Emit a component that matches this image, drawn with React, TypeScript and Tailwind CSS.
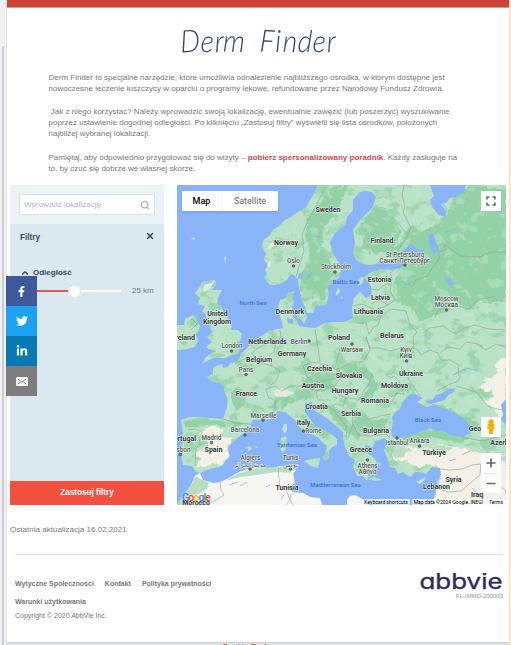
import React from "react";
import { FaFacebookF, FaTwitter, FaLinkedinIn } from "react-icons/fa";
import { ChevronUp, Search, X } from "lucide-react";

const mainland =
  "M318 185L315 192L310 200L306 207L298 212L291 217L285 220L279 226L273 230L269 236L263 240L262 248L266 254L264 260L268 265L265 270L267 274L264 278L270 285L278 285L287 280L291 274L294 275L298 280L300 292L303 303L305 307L307 313L313 313L315 306L326 305L329 294L327 286L333 283L339 277L342 268L337 260L332 252L330 242L335 233L345 225L347 217L353 210L353 200L360 192L365 191L372 192L376 197L373 207L366 214L360 220L353 230L355 243L353 253L356 260L363 264L370 265L383 263L397 261L406 263L403 267L392 270L380 269L370 273L364 277L368 282L371 286L372 295L366 298L360 292L354 298L352 308L353 318L345 322L335 322L325 323L315 328L305 327L299 326L297 321L293 317L292 307L294 302L292 299L294 291L288 293L286 298L280 300L278 308L279 313L282 323L283 328L273 330L268 331L263 335L259 337L255 343L250 345L242 353L237 362L230 363L228 367L223 368L222 364L216 366L213 368L213 374L207 377L211 381L220 383L224 387L225 393L228 399L227 407L223 419L210 418L198 417L190 417L181 420L183 433L181 453L183 465L192 466L196 472L200 473L210 469L222 466L226 460L230 457L228 448L235 440L241 435L248 430L251 426L252 420L263 420L270 419L273 416L278 411L285 412L291 417L295 420L299 426L302 430L313 435L319 438L322 442L327 446L326 451L323 458L325 461L329 457L329 451L332 447L337 445L337 439L330 433L320 428L315 426L312 422L308 416L305 412L305 403L312 402L313 407L317 412L327 418L337 427L343 432L343 437L345 447L350 457L355 460L353 467L357 476L363 476L367 481L369 474L376 476L371 468L380 466L374 458L367 453L365 445L373 447L375 441L385 438L388 441L384 450L388 460L390 467L395 468L398 474L403 472L410 477L415 472L420 472L426 474L432 467L440 468L441 475L438 480L435 495L432 505H506V185Z";
const africa =
  "M177 505L184 494L190 487L195 476L200 473L203 480L214 483L220 482L229 478L237 473L247 469L257 467L269 469L280 466L292 467L296 470L293 474L295 483L290 487L292 492L303 493L310 497L320 498L322 505Z M347 505V500L350 496L355 495L362 499L365 505Z";
const britain =
  "M203 282L209 281L215 280L216 284L212 290L222 290L218 298L217 304L221 306L224 313L229 321L232 327L230 330L238 330L242 334L240 341L236 346L240 350L237 354L229 356L225 358L213 358L203 363L205 358L212 353L216 351L209 349L206 347L212 342L207 337L213 332L210 328L213 321L207 319L205 313L202 312L205 306L198 304L200 298L195 293L199 288Z";
const ireland =
  "M193 315L196 317L197 322L200 325L199 330L196 334L198 340L195 347L187 349L177 350V325L184 325L185 319Z";
const islands =
  "M284 424L287 424L287 430L285 434L282 430Z M281 438L286 436L287 441L286 449L283 452L280 449Z M304 461L311 459L320 458L318 468L311 466Z M368 479L374 477L382 480L375 481Z M416 482L420 480L426 477L423 482L419 484Z M246 448L250 446L252 449L249 451Z M255 446L258 447L256 448Z M241 451L243 450L242 453Z M297 314L304 311L307 317L304 324L300 319L298 319Z M287 318L293 319L293 324L288 323Z M336 292L339 287L340 292L336 296Z M191 239L194 237L195 240Z M224 258L226 256L225 264Z M375 460L381 464L378 466Z M361 277L364 277L363 283L358 286L358 281Z M340 299L342 296L343 298Z";
const forest =
  "M506 190L470 185L455 195L448 212L436 226L420 232L412 226L404 234L400 244L387 253L398 262L410 266L396 276L392 288L396 302L412 308L420 322L440 313L453 300L470 308L480 300L490 304L506 298Z M335 185L349 185L340 205L325 226L322 244L330 262L334 275L326 282L325 300L315 298L303 302L300 286L304 270L310 255L305 235L308 215L322 200Z M375 205L385 210L396 220L401 232L392 250L370 255L361 245L365 235L357 230Z M340 368L357 362L373 374L377 390L370 399L356 401L368 391L370 382L358 374L345 377Z M305 378L322 370L337 374L338 386L322 392L303 388Z M232 390L240 388L246 394L244 406L236 410L232 404Z M268 408L276 398L290 394L306 389L320 391L312 398L294 401L278 410Z M300 412L314 425L327 433L324 438L311 429Z M323 402L340 411L352 425L362 433L358 440L346 432L334 420Z M427 403L445 406L462 415L480 425L475 430L462 421L447 411Z M394 436L410 433L430 427L452 433L470 438L460 443L432 437L408 441Z M183 421L205 420L230 421L246 424L235 427L205 425L187 428Z M385 392L402 384L415 385L400 391L392 398Z M351 415L372 420L388 419L383 431L370 434L357 428Z";
const dry =
  "M205 430L214 425L223 430L221 437L234 438L227 447L229 456L220 465L212 463L207 467L196 467L201 459L195 455L202 448L210 445L204 439L199 435Z M398 450L410 446L424 449L440 444L460 449L476 446L490 452L506 455V505H433L438 482L440 468L431 464L418 468L405 460L395 461L391 455Z M506 357L500 359L495 365L498 371L493 377L484 378L487 383L480 387L485 392L492 390L493 397L484 402L494 408L499 415L506 420Z";
const borders =
  "M326 185L319 200L313 212L307 222L302 235L304 251L299 266L296 277 M404 185L402 195L405 206L403 212L411 228L404 242L397 251 M408 256L404 264L396 268L390 273L392 279L391 284L384 285L378 290L371 289 M391 284L390 291L395 300L388 305L379 300L371 304 M353 306L362 304L376 310L388 305 M357 323L366 323L369 334L373 328L378 325L381 316L391 309L406 311L410 325L417 332L413 337L414 348L405 347L390 351L380 348L370 348L366 337 M366 337L370 350L363 362L352 362L345 366L336 370L329 365L320 364 M315 329L317 342L320 362L310 363L303 366L307 377L316 382L327 380L336 378 M280 330L281 337L276 343L274 352L269 355L272 366L280 371L276 381 M235 364L246 358L254 362L260 362L272 366 M256 361L252 353L257 349L265 344 M276 381L266 389L268 397L276 401L273 414 M267 389L275 386L282 391L290 386L303 386L303 377 M303 386L316 391L324 387L334 387L342 376L338 368 M336 370L349 377L360 376L367 370 M334 387L338 394L346 398L360 399L364 390L368 386L372 374 M316 391L318 400L331 400M331 406L337 404L343 406L346 398 M322 402L331 408L340 418L346 426L347 440 M343 406L347 412L352 412L353 424L348 438 M352 412L370 419L380 416L391 414 M353 424L358 435L370 436L386 434L390 438 M385 374L391 378L394 376L399 381L404 394L396 393L392 402 M414 348L418 350L421 355L430 350L438 353L441 360L450 360L459 365L458 374L460 377L458 381L448 385L437 391 M444 244L446 250L438 252L440 258L437 262L431 270L428 276L416 280L413 286L405 284 M444 244L452 250L461 256L480 257L490 252L506 252 M435 318L437 312L445 306L451 302L458 306L469 309L480 299L493 297L498 301L506 301 M423 333L430 328L443 326L450 331L456 334L464 328L475 325L488 329L506 330 M223 419L236 423L251 424 M188 430L195 429L202 432L199 439L200 444L196 448L195 466 M220 482L221 490L224 495L213 502L207 505 M279 468L278 476L280 478L279 484L286 490L290 500L293 505 M291 494L290 500L286 505 M439 469L450 470L462 469L472 465L481 464L480 475L461 491L448 492L437 488 M480 443L490 454L486 465L494 480L506 491 M462 437L482 441L506 435 M456 386L476 392L489 407L506 411 M440 353L448 347L460 349L466 342L478 344L486 350L496 344L506 347 M340 349L336 363 M187 324L192 319L197 324L191 330";

type MapLabel = [string, number, number, ("city" | "sea")?];
const labels: MapLabel[] = [
  ["Sweden", 328, 209.5], ["Norway", 286, 242.5], ["Finland", 382, 241], ["Oslo", 293.5, 260.5, "city"],
  ["Stockholm", 336, 267, "city"], ["St Petersburg", 405, 254.5, "city"], ["Санкт-Петербург", 404.5, 260.5, "city"],
  ["Baltic Sea", 346, 281.5, "sea"], ["North Sea", 253, 302.5, "sea"], ["Estonia", 379.5, 279.5],
  ["Latvia", 380.5, 297.5], ["Lithuania", 368.5, 312], ["Moscow", 446.5, 299, "city"], ["Москва", 446.5, 305, "city"],
  ["Denmark", 290, 312], ["United", 217.5, 314], ["Kingdom", 217, 321.5], ["Ireland", 184, 337.5],
  ["Netherlands", 267.5, 341.5], ["Berlin", 299, 341.5, "city"], ["Poland", 339, 338], ["Belarus", 392, 335.5],
  ["London", 232, 345.5, "city"], ["Belgium", 259, 360], ["Germany", 292, 354], ["Warsaw", 352, 349.5, "city"],
  ["Kyiv", 406, 349.5, "city"], ["Київ", 406, 355.5, "city"], ["Paris", 246, 369.5, "city"], ["Czechia", 319.5, 369],
  ["Slovakia", 349, 376], ["Ukraine", 411, 373.5], ["Austria", 313, 385.5], ["Hungary", 345, 391],
  ["Moldova", 394.5, 385.5], ["France", 246.5, 393.5], ["Romania", 375, 400.5], ["Croatia", 316.5, 406.5],
  ["Marseille", 263.5, 415.5, "city"], ["Serbia", 351, 414], ["Italy", 303.5, 422.5], ["Rome", 313.5, 431, "city"],
  ["Bulgaria", 376, 430.5], ["Black Sea", 428, 419.5, "sea"], ["Georgia", 481, 429], ["Barcelona", 245, 430, "city"],
  ["Portugal", 182.5, 439], ["Madrid", 211.5, 437.5, "city"], ["Lisbon", 181, 450, "city"], ["Spain", 213.5, 449.5],
  ["Tyrrhenian Sea", 297, 444.5, "sea"], ["İstanbul", 397, 443, "city"], ["Ankara", 419.5, 441, "city"],
  ["Greece", 361, 449.5], ["Türkiye", 434, 453], ["Azerbaijan", 507, 443], ["Algiers", 250.5, 458, "city"],
  ["مدينة الجزائر", 250, 464.5, "city"], ["Tunis", 290.5, 458, "city"], ["تونس", 290.5, 464.5, "city"],
  ["Athens", 367.5, 465.5, "city"], ["Αθήνα", 367.5, 471.5, "city"], ["Tunisia", 287, 487.5],
  ["Mediterranean Sea", 335.5, 484.5, "sea"], ["Syria", 453.5, 479.5], ["Lebanon", 436.5, 487],
  ["Iraq", 477, 495], ["Morocco", 196, 502.5],
];
const dots = [[293.5, 266], [335, 272], [405, 265], [446.5, 310], [309, 341], [231.5, 351], [352, 344], [406.5, 361], [246, 374.5], [263, 420], [303.5, 431], [245, 435], [211.5, 442.5], [180.5, 454.5], [397, 438], [419.5, 446], [250, 469], [290.5, 469], [367.5, 460]];

function MapDrawing() {
  return (
    <svg viewBox="177 185 329 320" className="absolute inset-0 h-full w-full" preserveAspectRatio="none">
      <defs>
        <filter id="patches" x="0" y="0" width="100%" height="100%" colorInterpolationFilters="sRGB">
          <feTurbulence type="fractalNoise" baseFrequency="0.06 0.08" numOctaves="4" seed="8" />
          <feColorMatrix values="0 0 0 0 0.58  0 0 0 0 0.82  0 0 0 0 0.65  9 0 0 0 -4.9" />
        </filter>
        <filter id="lights" x="0" y="0" width="100%" height="100%" colorInterpolationFilters="sRGB">
          <feTurbulence type="fractalNoise" baseFrequency="0.09" numOctaves="3" seed="21" />
          <feColorMatrix values="0 0 0 0 0.74  0 0 0 0 0.9  0 0 0 0 0.79  0 9 0 0 -5.1" />
        </filter>
        <filter id="coast" x="0" y="0" width="100%" height="100%">
          <feTurbulence type="fractalNoise" baseFrequency="0.2" numOctaves="2" seed="4" result="n" />
          <feDisplacementMap in="SourceGraphic" in2="n" scale="5" xChannelSelector="R" yChannelSelector="G" />
        </filter>
        <clipPath id="land"><path d={mainland + britain + ireland + islands} /></clipPath>
      </defs>
      <rect x="177" y="185" width="329" height="320" fill="#8ab4f8" />
      <path d={mainland + britain + ireland + islands} fill="#b9e2c6" />
      <path d={africa} fill="#f9f6f1" />
      <g clipPath="url(#land)">
        <path d={forest} fill="#93d1a6" filter="url(#coast)" />
        <rect x="177" y="185" width="329" height="320" filter="url(#patches)" opacity=".75" />
        <rect x="177" y="185" width="329" height="320" filter="url(#lights)" opacity=".5" />
        <g filter="url(#coast)">
          <path d={dry} fill="#f5f0e6" />
          <path d="M391 454L400 448L412 449L404 455L398 459Z M425 448L440 445L452 448L446 453L436 450Z M464 448L477 445L492 453L506 456V462L491 458L480 453Z M437 471L442 475L438 486L435 492Z" fill="#b9ddc0" />
        </g>
      </g>
      <path d="M177 505L184 494L190 487L196 476L202 480L209 482L207 489L198 494L188 496L181 505Z M225 481L237 474L257 468L280 467L294 468L290 473L276 472L257 475L240 477Z" fill="#b7dec0" />
      <path d="M265 250L271 243L279 239L276 245L269 249Z M267 265L271 259L270 268Z M273 391L282 388L295 393L286 397L275 396Z M204 285L214 282L210 289L203 292Z" fill="#e1ebe0" />
      <path d="M392 437L391 430L393 423L392 417L395 412L400 409L402 403L407 397L411 394L417 395L423 398L417 402L427 407L434 405L440 407L453 412L465 420L472 428L470 433L463 437L450 435L444 431L437 431L430 428L420 432L407 437L398 438Z" fill="#8ab4f8" />
      <path d="M425 401L432 400L436 395L443 393L447 390L455 388L453 393L448 395L445 400L438 402L430 404Z M506 399L501 405L503 414L501 419L506 425Z M430 185L466 185L464 192L458 196L450 198L446 203L441 204L447 212L445 217L439 215L432 207L430 200L434 196Z M403 252L406 248L411 243L417 249L424 251L418 255L405 253Z M428 235L433 233L437 245L439 250L434 254L430 247Z M387 441L394 440L390 443Z M299 274L304 271L302 277L297 280Z M307 276L312 272L309 280Z M444 277L450 278L454 284L450 286Z" fill="#8ab4f8" />
      <path d="M379 207L386 209M387 215L392 219M398 222L405 232M366 213L374 221M447 210L443 203M418 227L422 223M445 232L457 229M320 216L326 223M338 203L343 199M315 236L321 237M408 284L412 282M425 335L430 339M420 396L413 386L408 378L401 367M453 375L467 368L478 371M240 486L247 482M229 485L238 482M266 487L270 485M281 499L284 495M462 455L470 451M449 461L456 459M472 488L480 497" fill="none" stroke="#88b9ef" strokeWidth=".9" />
      <path d={borders} fill="none" stroke="#8ba398" strokeWidth=".6" />
      {dots.map(([x, y]) => <circle key={`${x}-${y}`} cx={x} cy={y} r="1.3" fill="#6d7873" stroke="#4b5652" strokeWidth=".8" />)}
      <g className="font-[Roboto,'Noto_Sans',sans-serif]" textAnchor="middle" paintOrder="stroke" strokeLinejoin="round">
        {labels.map(([name, x, y, kind]) => (
          <text key={name} x={x} y={y + 2.2} fontSize={kind === "sea" ? 6 : kind === "city" ? 6.3 : 7} fontWeight={kind ? 500 : 700} fill={kind === "sea" ? "#3973d7" : kind === "city" ? "#4b5552" : "#303936"} stroke={kind === "sea" ? "none" : "#edf5ee"} strokeWidth="1">{name}</text>
        ))}
      </g>
    </svg>
  );
}

function MapPanel() {
  return (
    <section className="relative h-80 w-[329px] overflow-hidden font-[Roboto,sans-serif]">
      <MapDrawing />
      <div className="absolute left-[5px] top-[6px] flex h-5 w-24 rounded-[1px] bg-white text-[9px] leading-5 shadow-sm">
        <span className="w-10 border-r border-gray-100 text-center font-medium text-black">Map</span>
        <span className="flex-1 text-center text-[#666]">Satellite</span>
      </div>
      <div className="absolute right-[5px] top-[6px] flex size-5 items-center justify-center bg-white">
        <svg viewBox="0 0 10 10" className="size-[10px]" fill="none" stroke="#666" strokeWidth="1.5"><path d="M1 3.5V1H3.5M6.5 1H9V3.5M9 6.5V9H6.5M3.5 9H1V6.5" /></svg>
      </div>
      <div className="absolute right-[5px] top-[232px] flex size-5 items-center justify-center bg-white">
        <svg viewBox="0 0 10 16" className="h-4 w-[10px]"><path d="M2 5H8L9 10H7.5L7 15H3L2.5 10H1Z" fill="#fbb713" /><circle cx="5" cy="3" r="2.7" fill="#f9ab00" /><path d="M3 5.5Q5 7.5 7 5.5M5 10V15" fill="none" stroke="#df8b00" strokeWidth=".7" /></svg>
      </div>
      <div className="absolute right-[5px] top-[268px] flex h-10 w-5 flex-col items-center bg-white">
        <svg viewBox="0 0 20 40" className="h-10 w-5" stroke="#666" strokeWidth="1.7"><path d="M5.5 10H14.5M10 5.5V14.5M5.5 30.5H14.5" /><path d="M3 20.5H17" stroke="#e6e6e6" strokeWidth="1" /></svg>
      </div>
      <div className="absolute bottom-[2px] left-[5px] flex text-[10.5px] font-medium leading-[11px] tracking-[-.9px]">
        <span className="text-[#4285f4]">G</span><span className="text-[#ea4335]">o</span><span className="text-[#fbbc05]">o</span><span className="text-[#4285f4]">g</span><span className="text-[#34a853]">l</span><span className="text-[#ea4335]">e</span>
      </div>
      <div className="absolute bottom-0 right-0 flex h-[6px] items-center whitespace-nowrap text-[5px] leading-[6px] text-black">
        <span className="bg-white/70 px-[2px]">Keyboard shortcuts</span>
        <span className="ml-[2px] bg-white/70 px-[2px]">Map data ©2024 Google, INEGI</span>
        <span className="bg-white/70 pl-1 pr-[3px]">Terms</span>
      </div>
    </section>
  );
}

function Filters() {
  return (
    <aside className="flex h-80 w-[154px] flex-col bg-[#d9e9ef]">
      <div className="h-[39px] shrink-0 bg-[#eaf4f7] px-[9px] pt-[9px]">
        <div className="flex h-[21px] items-center justify-between border border-[#dce2e5] bg-white pl-1 pr-[4px] text-[8px] text-[#b4b6bf]">
          <span className="whitespace-nowrap">Wprowadź lokalizację</span><Search className="size-[10px]" strokeWidth={3} />
        </div>
      </div>
      <div className="flex h-[26px] items-center justify-between px-[10px] text-[8.2px] font-bold text-[#3d475b]">
        <span className="pt-[2px]">Filtry</span><X className="mb-[2px] mr-[-1px] size-[10px]" strokeWidth={3.5} />
      </div>
      <div className="mt-4 flex h-[14px] items-center gap-[3px] pl-[10px] text-[8px] font-bold text-[#3d475b]">
        <ChevronUp className="size-[10px]" strokeWidth={3} />Odległość
      </div>
      <div className="mt-1 flex h-[14px] items-center pl-[10px]">
        <div className="flex w-[101px] items-center">
          <div className="h-[2px] w-[52px] bg-[#f35445]" />
          <div className="-ml-1 size-[13px] shrink-0 rounded-full border border-[#e2e8eb] bg-white" />
          <div className="h-[2px] flex-1 bg-white" />
        </div>
        <span className="ml-[11px] whitespace-nowrap text-[8px] text-[#707880]">25 km</span>
      </div>
      <button className="mt-auto h-6 w-full bg-[#f45040] text-[8.2px] font-bold leading-6 text-white">Zastosuj filtry</button>
    </aside>
  );
}

const titleLetters: [string, string][] = [
  ["D", "w-[20px] -rotate-3"], ["e", "w-[14px] rotate-3"], ["r", "w-[10px] -rotate-2"], ["m", "w-[20px] rotate-2"],
  [" ", "w-[15px]"],
  ["F", "w-[16px] rotate-3"], ["i", "w-[7px]"], ["n", "w-[15px] rotate-2"], ["d", "w-[15px] rotate-3"], ["e", "w-[14px] rotate-3"], ["r", "w-[10px] -rotate-2"],
];

export default function App() {
  return (
    <div className="relative flex h-[645px] w-[511px] overflow-hidden bg-white font-['Liberation_Sans',Arial,sans-serif] text-[#777]">
      <div className="flex w-[7px] shrink-0 flex-col border-r border-[#dedee3] bg-[#f1f1f3]">
        <div className="h-[46px]" /><div className="ml-[2px] w-[2px] flex-1 bg-[#ccccd0]" />
      </div>
      <main className="flex h-full w-[502px] flex-col">
        <header className="h-2 shrink-0 border-b border-[#dc9188] bg-[#cc4437]" />
        <h1 className="flex h-16 w-full items-center justify-center pt-px font-[Lato,sans-serif] text-[31px] font-light italic leading-[63px] text-[#2f4767]">
          {titleLetters.map(([letter, shape], i) => <span key={i} className={`inline-flex h-[63px] justify-center whitespace-pre ${shape}`}><span className="scale-x-[.9]">{letter}</span></span>)}
        </h1>
        <div className="ml-[41.5px] h-[113px] whitespace-nowrap text-[8px] leading-[11px]">
          <p>Derm Finder to specjalne narzędzie, które umożliwia odnalezienie najbliższego ośrodka, w którym dostępne jest<br />nowoczesne leczenie łuszczycy w oparciu o programy lekowe, refundowane przez Narodowy Fundusz Zdrowia.</p>
          <p className="mt-3">&nbsp;Jak z niego korzystać? Należy wprowadzić swoją lokalizację, ewentualnie zawęzić (lub poszerzyć) wyszukiwanie<br />poprzez ustawienie dogodnej odległości. Po kliknięciu „Zastosuj filtry” wyświetli się lista ośrodków, położonych<br />najbliżej wybranej lokalizacji.</p>
          <p className="mt-[13px]">Pamiętaj, aby odpowiednio przygotować się do wizyty – <b className="text-[#d44750]">pobierz spersonalizowany poradnik</b>. Każdy zasługuje na<br />to, by czuć się dobrze we własnej skórze.</p>
        </div>
        <div className="ml-[3px] flex h-80 gap-[13px]"><Filters /><MapPanel /></div>
        <p className="ml-[3px] mt-5 h-[10px] whitespace-nowrap text-[8.05px] leading-[10px]">Ostatnia aktualizacja 16.02.2021</p>
        <footer className="ml-2 mt-[19px] flex w-[488px] justify-between border-t border-[#dedede] pt-[23px] text-[7px]">
          <div>
            <nav className="flex h-3 gap-[11px] whitespace-nowrap font-bold leading-3"><span>Wytyczne Społeczności</span><span>Kontakt</span><span>Polityka prywatności</span></nav>
            <div className="mt-[6px] font-bold leading-3">Warunki użytkowania</div>
            <div className="mt-[2px] leading-3">Copyright © 2020 AbbVie Inc.</div>
          </div>
          <div className="mt-[-5px] flex w-[83px] flex-col items-end">
            <svg viewBox="0 0 83 20" className="h-5 w-[83px]" role="img"><text x="-0.5" y="16" textLength="83" lengthAdjust="spacingAndGlyphs" fontSize="21" fill="#292d61" stroke="#292d61" strokeWidth=".35" className="font-[Inter,sans-serif] font-normal [font-feature-settings:'cv11']">abbvie</text></svg>
            <span className="text-[6px] leading-[7px] text-[#969696]">PL-IMMD-200009</span>
          </div>
        </footer>
        <div className="mt-auto flex h-[3px] shrink-0 overflow-hidden border-t border-[#cad1d0] bg-[#dce2e2]"><span className="ml-[215px] text-[8px] font-bold leading-[8px] text-[#d44750]">Cookie Preferences</span></div>
      </main>
      <div className="flex-1 bg-[#fce5cc]" />
      <aside className="absolute left-[6px] top-[276px] flex w-[31px] flex-col text-white">
        <div className="flex h-[30px] items-center justify-center bg-[#3e5999]"><FaFacebookF size={11} /></div>
        <div className="flex h-[30px] items-center justify-center bg-[#1da1f2]"><FaTwitter size={12} /></div>
        <div className="flex h-[30px] items-center justify-center bg-[#0879b6]"><FaLinkedinIn size={12} /></div>
        <div className="flex h-[30px] items-center justify-center bg-[#7d7d7d]">
          <svg viewBox="0 0 12 9" className="h-[9px] w-3"><rect width="12" height="9" rx="1" fill="#f4f4f4" /><path d="M2 2L6 5.2L10 2M2 7L4.5 5M10 7L7.5 5" fill="none" stroke="#7d7d7d" strokeWidth="1" /></svg>
        </div>
      </aside>
    </div>
  );
}
